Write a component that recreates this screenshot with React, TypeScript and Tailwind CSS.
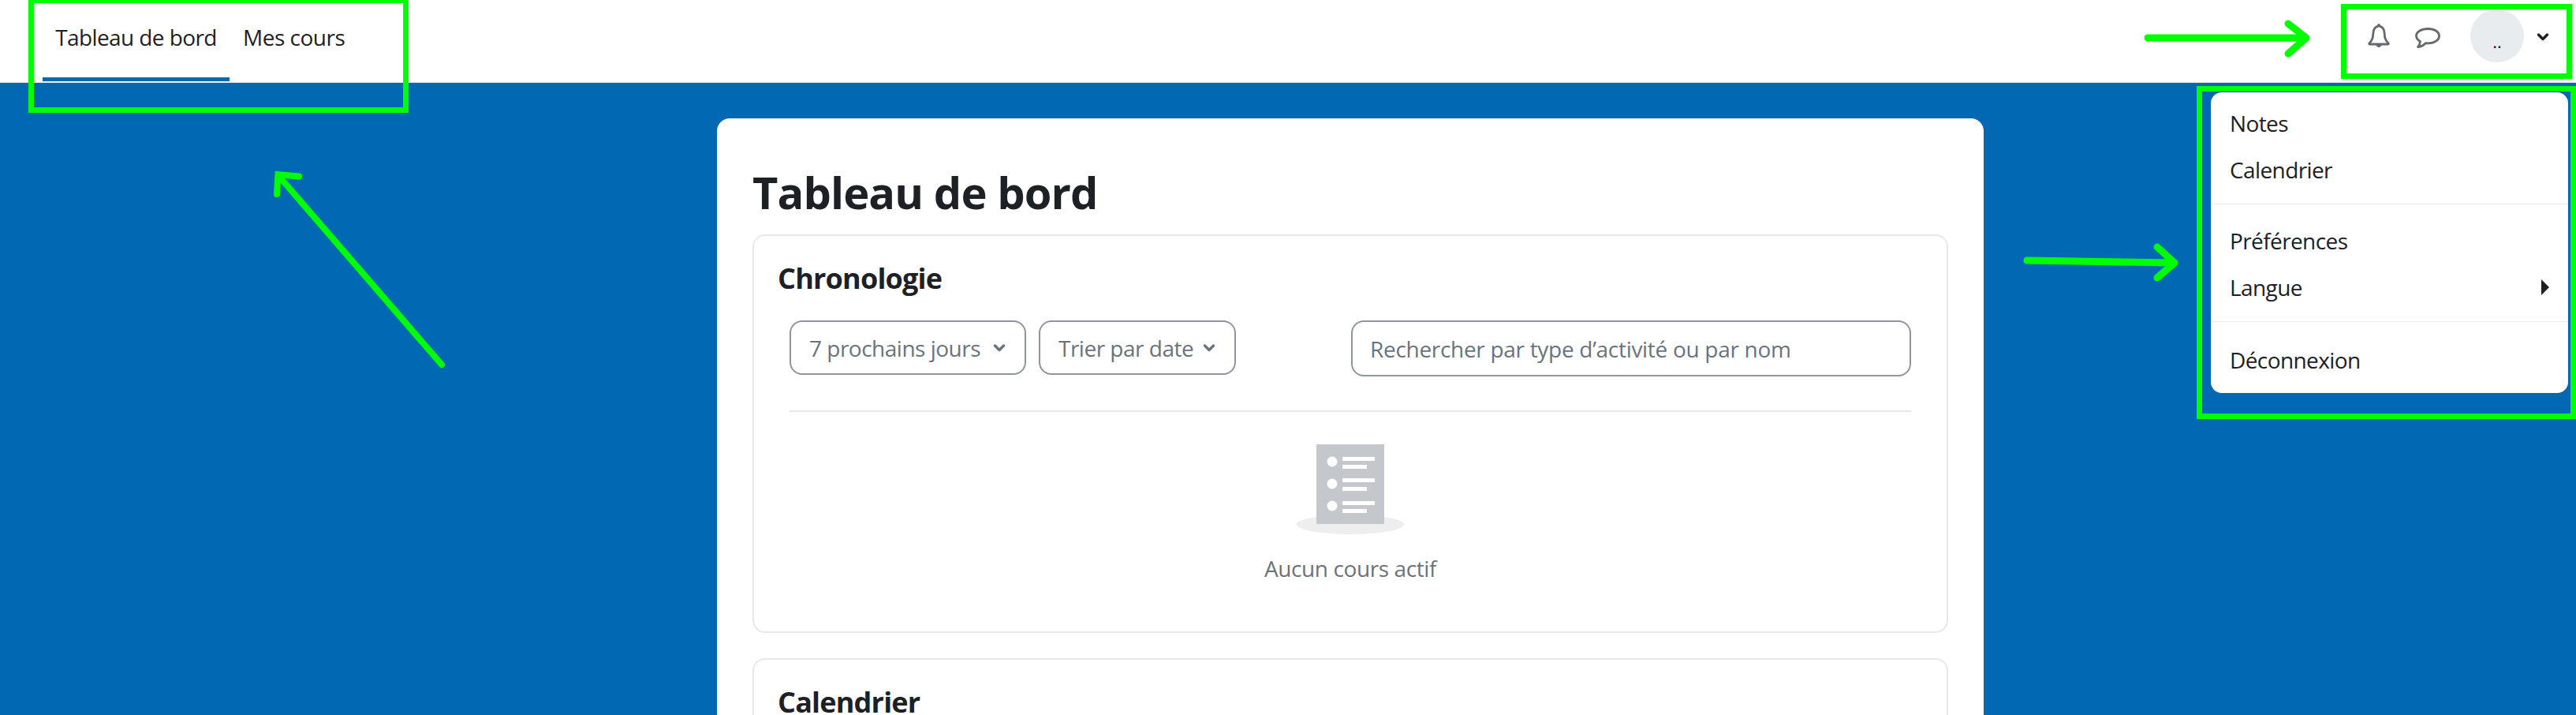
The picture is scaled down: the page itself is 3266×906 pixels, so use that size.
const font = "font-['Open_Sans','Noto_Sans',sans-serif]";

function Chevron({ color, className }: { color: string; className: string }) {
  return (
    <svg viewBox="0 0 16 12" className={className} fill="none" stroke={color} strokeWidth="3.4" strokeLinecap="round" strokeLinejoin="round">
      <path d="M2.5 3 L8 8.5 L13.5 3" />
    </svg>
  );
}

function MenuItem({ label, caret }: { label: string; caret?: boolean }) {
  return (
    <div className="flex h-[59px] items-center justify-between pl-[24px] pr-[24px]">
      <span className="text-[28px] tracking-[-0.6px] text-[#1d2125]">{label}</span>
      {caret && (
        <svg viewBox="0 0 10 20" className="h-[22px] w-[10px]" fill="#1d2125">
          <path d="M0 0 L10 10 L0 20 Z" />
        </svg>
      )}
    </div>
  );
}

function Select({ label, w }: { label: string; w: string }) {
  return (
    <div className={`flex h-[69px] items-center justify-between rounded-[16px] border-2 border-[#8f959e] pl-[23px] pr-[24px] ${w}`}>
      <span className="text-[28px] tracking-[-0.5px] text-[#6a737b]">{label}</span>
      <Chevron color="#6a737b" className="h-[12px] w-[16px]" />
    </div>
  );
}

export default function App() {
  return (
    <div className={`relative h-[906px] w-[3266px] overflow-hidden bg-[#0168b3] ${font}`}>
      <header className="flex h-[105px] items-center justify-between border-b border-[#dee2e6] bg-white">
        <nav className="ml-[54px] flex h-full items-start">
          <a className="flex h-[103px] w-[237px] items-start justify-center border-b-[5px] border-[#0168b3] pt-[27px] text-[28px] leading-[40px] tracking-[-0.6px] text-[#1d2125]">Tableau de bord</a>
          <a className="ml-[17px] flex h-[103px] items-start justify-center pt-[27px] text-[28px] leading-[40px] tracking-[-0.5px] text-[#1d2125]">Mes cours</a>
        </nav>
        <div className="mb-[13px] flex items-center">
          <svg viewBox="0 0 28 31" className="h-[31px] w-[28px]" fill="none" stroke="#666a6e" strokeWidth="2.8" strokeLinejoin="round" strokeLinecap="round">
            <path d="M14 2.800 C9 3.800 6.800 7.500 6.800 12.500 C6.800 18.500 5 22 1.800 25 C1.500 25.500 1.800 26 2.500 26 H25.500 C26.200 26 26.500 25.500 26.200 25 C23 22 21.200 18.500 21.200 12.500 C21.200 7.500 19 3.800 14 2.800 Z" />
            <circle cx="14" cy="2" r="1.200" fill="#666a6e" strokeWidth="1.500" />
            <path d="M10.500 26.500 C11.200 30.500 16.800 30.500 17.500 26.500 Z" fill="#666a6e" strokeWidth="1" />
          </svg>
          <svg viewBox="0 0 32 26" className="ml-[32px] mt-[5px] h-[26px] w-[32px]" fill="none" stroke="#666a6e" strokeWidth="2.800" strokeLinejoin="round" strokeLinecap="round">
            <path d="M16.500 1.500 C8 1.500 1.500 5.200 1.500 10.500 C1.500 13.500 3.500 15.800 6.500 17.500 C6.300 20.500 5 23 3.500 24.500 C7.500 24.300 11 22.300 13.300 19.700 C14.300 19.800 15.500 19.800 16.500 19.800 C24.500 19.800 30.500 15.800 30.500 10.500 C30.500 5.200 24.500 1.500 16.500 1.500 Z" />
          </svg>
          <div className="ml-[38px] flex h-[67px] w-[68px] items-center justify-center rounded-full bg-[#e9ecef] pt-[14px] text-[22px] text-[#1d2125]">..</div>
          <Chevron color="#1d2125" className="ml-[16px] mr-[34px] mt-[3px] h-[12px] w-[16px]" />
        </div>
      </header>

      <main className="pl-[909px] pt-[45px]">
        <section className="w-[1606px] rounded-[16px] bg-white px-[45px] pb-[40px] pt-[60px]">
          <h1 className="mb-[20px] text-[56px] font-bold leading-[67px] tracking-[-0.9px] text-[#1d2125]">Tableau de bord</h1>

          <div className="h-[505px] rounded-[16px] border-2 border-[#e6e8ea] px-[45px] pt-[30px]">
            <h2 className="-ml-[15px] mb-[29px] text-[36px] font-bold leading-[48px] tracking-[-0.8px] text-[#1d2125]">Chronologie</h2>
            <div className="flex items-start">
              <Select label="7 prochains jours" w="w-[300px]" />
              <div className="ml-[16px]">
                <Select label="Trier par date" w="w-[250px]" />
              </div>
              <div className="ml-auto flex h-[71px] w-[710px] items-center rounded-[16px] border-2 border-[#8f959e] pl-[22px]">
                <span className="text-[28px] tracking-[-0.3px] text-[#6a737b]">Rechercher par type d’activité ou par nom</span>
              </div>
            </div>
            <div className="mt-[43px] border-t-2 border-[#e6e8ea]" />
            <div className="mt-[41px] flex flex-col items-center">
              <svg viewBox="0 0 136 114" className="h-[114px] w-[136px]">
                <ellipse cx="68" cy="101.500" rx="68" ry="12.500" fill="#eeeeee" />
                <rect x="25" y="0" width="86" height="101" fill="#c4c7cb" />
                <circle cx="45" cy="22" r="6.500" fill="#fff" />
                <rect x="58" y="16" width="41" height="5" fill="#fff" />
                <rect x="58" y="26" width="31" height="5" fill="#fff" />
                <circle cx="45" cy="50" r="6.500" fill="#fff" />
                <rect x="58" y="43" width="41" height="5" fill="#fff" />
                <rect x="58" y="54" width="31" height="5" fill="#fff" />
                <circle cx="45" cy="78" r="6.500" fill="#fff" />
                <rect x="58" y="72" width="41" height="5" fill="#fff" />
                <rect x="58" y="82" width="31" height="5" fill="#fff" />
              </svg>
              <p className="mt-[23px] text-[28px] leading-[40px] tracking-[-0.4px] text-[#6a737b]">Aucun cours actif</p>
            </div>
          </div>

          <div className="mt-[32px] h-[200px] rounded-[16px] border-2 border-[#e6e8ea] px-[30px] pt-[30px]">
            <h2 className="text-[36px] font-bold leading-[48px] tracking-[-0.8px] text-[#1d2125]">Calendrier</h2>
          </div>
        </section>
      </main>

      {/* open user menu */}
      <div className="absolute left-[2803px] top-[117px] w-[453px] rounded-[14px] bg-white pb-[13px] pt-[9px]">
        <MenuItem label="Notes" />
        <MenuItem label="Calendrier" />
        <div className="mb-[16px] mt-[14px] border-t border-[#e9ecef]" />
        <MenuItem label="Préférences" />
        <MenuItem label="Langue" caret />
        <div className="mb-[18px] mt-[14px] border-t border-[#e9ecef]" />
        <MenuItem label="Déconnexion" />
      </div>

      {/* hand-drawn annotations */}
      <div className="absolute left-[36px] top-[-3px] h-[146px] w-[482px] border-[7px] border-[#00ff00]" />
      <div className="absolute left-[2968px] top-[5px] h-[95px] w-[293px] border-[7px] border-[#00ff00]" />
      <div className="absolute left-[2785px] top-[109px] h-[422px] w-[481px] border-[7px] border-[#00ff00]" />
      <svg className="absolute left-0 top-0 h-[906px] w-[3266px]" viewBox="0 0 3266 906" fill="none" stroke="#00ff00" strokeWidth="9" strokeLinecap="round" strokeLinejoin="round">
        <path d="M2723 48 H2922 M2901 30 L2924 48 L2901 68" />
        <path d="M2570 330 L2755 333 M2735 313 L2757 333 L2735 352" />
        <path d="M560 462 L356 226 M379 223.500 L352.500 221 L351 246" strokeWidth="8" strokeLinejoin="miter" />
      </svg>
    </div>
  );
}
